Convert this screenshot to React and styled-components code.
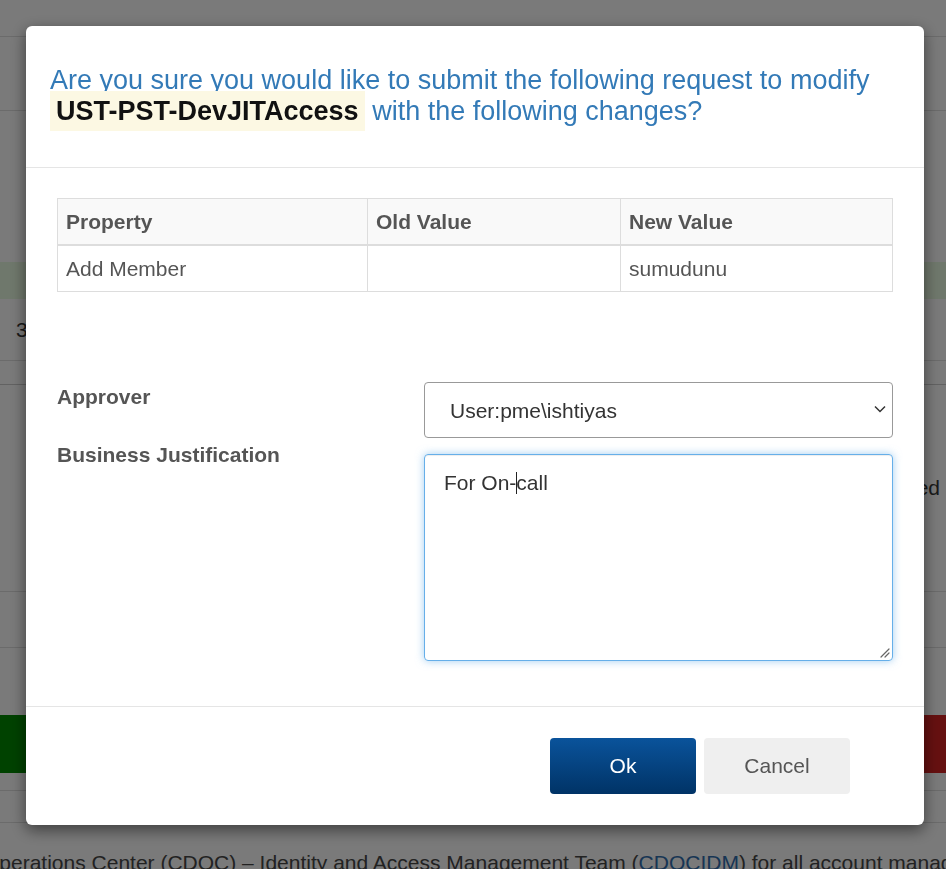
import React from "react";
import styled, { createGlobalStyle } from "styled-components";

const GlobalStyle = createGlobalStyle`
  html, body { margin: 0; padding: 0; }
  body {
    font-family: "Liberation Sans", Arial, Helvetica, sans-serif;
    font-size: 21px;
    color: #333;
    background: #f4f4f4;
    overflow: hidden;
  }
  * { box-sizing: border-box; }
`;

/* ---------- background page ---------- */
const Page = styled.div`
  width: 946px;
  height: 869px;
  overflow: hidden;
  background: #f4f4f4;
  display: flex;
  flex-direction: column;
`;

const Band = styled.div`
  flex: none;
  height: ${(p) => p.$h}px;
  border-bottom: ${(p) => (p.$line ? `1px solid ${p.$line}` : "none")};
  background: ${(p) => p.$bg || "transparent"};
  display: flex;
  align-items: center;
  justify-content: ${(p) => p.$justify || "flex-start"};
  padding: 0 ${(p) => p.$pad || 0}px;
  color: #333;
  white-space: nowrap;
`;

const PageButton = styled.div`
  width: 80px;
  height: 100%;
  background: ${(p) => p.$color};
`;

const FooterNote = styled.p`
  margin: 28px 0 0 -17px;
  white-space: nowrap;
  color: #444;
  font-size: 21px;
  line-height: 24px;
  a { color: #2f6aa8; text-decoration: none; }
`;

/* ---------- modal ---------- */
const Overlay = styled.div`
  position: fixed;
  inset: 0;
  background: rgba(0, 0, 0, 0.5);
`;

const Modal = styled.div`
  position: fixed;
  top: 26px;
  left: 26px;
  width: 898px;
  background: #fff;
  border-radius: 6px;
  box-shadow: 0 5px 15px rgba(0, 0, 0, 0.5);
  display: flex;
  flex-direction: column;
`;

const Header = styled.div`
  padding: 39px 24px 40px;
  border-bottom: 1px solid #e5e5e5;
`;

const Title = styled.h3`
  margin: 0;
  font-size: 27px;
  line-height: 31px;
  font-weight: normal;
  color: #337ab7;
`;

const Mark = styled.mark`
  background: #fcf8e3;
  color: #111;
  font-weight: bold;
  padding: 5px 6px;
`;

const Body = styled.div`
  padding: 30px 31px 45px;
`;

const Table = styled.table`
  width: 100%;
  border-collapse: collapse;
  border: 1px solid #ddd;
  table-layout: fixed;
  color: #555;
`;

const Th = styled.th`
  width: ${(p) => (p.$w ? `${p.$w}px` : "auto")};
  background: #f9f9f9;
  text-align: left;
  font-weight: bold;
  padding: 8px;
  line-height: 29px;
  border: 1px solid #ddd;
  border-bottom: 2px solid #ddd;
`;

const Td = styled.td`
  padding: 8px;
  line-height: 29px;
  border: 1px solid #ddd;
`;

const Form = styled.div`
  margin-top: 90px;
  display: grid;
  grid-template-columns: 367px 1fr;
  align-items: start;
`;

const Label = styled.label`
  font-weight: bold;
  color: #555;
  line-height: 30px;
  margin-top: ${(p) => p.$offset || 0}px;
`;

const SelectWrap = styled.div`
  position: relative;
  height: 56px;
`;

const Select = styled.select`
  appearance: none;
  width: 100%;
  height: 56px;
  border: 1px solid #999;
  border-radius: 4px;
  background: #fff;
  padding: 0 40px 0 25px;
  font: inherit;
  color: #333;
  outline: none;
`;

const Chevron = styled.svg`
  position: absolute;
  right: 7px;
  top: 23px;
  pointer-events: none;
`;

const TextArea = styled.div`
  position: relative;
  margin-top: 16px;
  height: 207px;
  border: 1px solid #66afe9;
  border-radius: 4px;
  box-shadow: inset 0 1px 1px rgba(0, 0, 0, 0.075), 0 0 8px rgba(102, 175, 233, 0.6);
  padding: 13px 19px;
  line-height: 30px;
  color: #333;
`;

const Caret = styled.span`
  display: inline-block;
  width: 1px;
  height: 22px;
  background: #222;
  vertical-align: -4px;
  margin-right: -1px;
`;

const Grip = styled.svg`
  position: absolute;
  right: 2px;
  bottom: 2px;
`;

const Footer = styled.div`
  border-top: 1px solid #e5e5e5;
  padding: 31px 74px 31px 0;
  display: flex;
  justify-content: flex-end;
  gap: 8px;
`;

const Button = styled.button`
  width: 146px;
  height: 56px;
  border: none;
  border-radius: 4px;
  font: inherit;
  font-size: 21px;
  cursor: pointer;
  color: ${(p) => (p.$primary ? "#fff" : "#555")};
  background: ${(p) =>
    p.$primary ? "linear-gradient(to bottom, #0a539b 0%, #003366 100%)" : "#efefef"};
`;

export default function App() {
  return (
    <>
      <GlobalStyle />
      <Page>
        <Band $h={37} $line="#d6d6d6" />
        <Band $h={74} $line="#d6d6d6" />
        <Band $h={151} />
        <Band $h={37} $bg="#dff0d8" />
        <Band $h={62} $line="#d6d6d6" $pad={16}>3</Band>
        <Band $h={24} $line="#c4c4c4" />
        <Band $h={207} $line="#d6d6d6" $justify="flex-end" $pad={6}>Approved</Band>
        <Band $h={56} $line="#d6d6d6" />
        <Band $h={67} />
        <Band $h={58} $justify="space-between">
          <PageButton $color="#008400" />
          <PageButton $color="#cc2222" />
        </Band>
        <Band $h={18} $line="#d6d6d6" />
        <Band $h={32} $line="#d6d6d6" />
        <FooterNote>
          Operations Center (CDOC) – Identity and Access Management Team (<a href="#">CDOCIDM</a>) for all account management requests.
        </FooterNote>
      </Page>

      <Overlay />

      <Modal role="dialog">
        <Header>
          <Title>
            Are you sure you would like to submit the following request to modify{" "}
            <Mark>UST-PST-DevJITAccess</Mark> with the following changes?
          </Title>
        </Header>

        <Body>
          <Table>
            <thead>
              <tr>
                <Th $w={310}>Property</Th>
                <Th $w={253}>Old Value</Th>
                <Th>New Value</Th>
              </tr>
            </thead>
            <tbody>
              <tr>
                <Td>Add Member</Td>
                <Td></Td>
                <Td>sumudunu</Td>
              </tr>
            </tbody>
          </Table>

          <Form>
            <Label>Approver</Label>
            <SelectWrap>
              <Select defaultValue="pme">
                <option value="pme">User:pme\ishtiyas</option>
              </Select>
              <Chevron width="12" height="8" viewBox="0 0 12 8">
                <path d="M1 1.5 L6 6.5 L11 1.5" fill="none" stroke="#333" strokeWidth="1.5" />
              </Chevron>
            </SelectWrap>
            <Label $offset={2}>Business Justification</Label>
            <TextArea role="textbox">
              For On-<Caret />call
              <Grip width="12" height="12" viewBox="0 0 12 12">
                <path d="M11 3 L3 11 M11 7 L7 11" stroke="#666" strokeWidth="1.2" strokeLinecap="round" />
              </Grip>
            </TextArea>
          </Form>
        </Body>

        <Footer>
          <Button $primary>Ok</Button>
          <Button>Cancel</Button>
        </Footer>
      </Modal>
    </>
  );
}
